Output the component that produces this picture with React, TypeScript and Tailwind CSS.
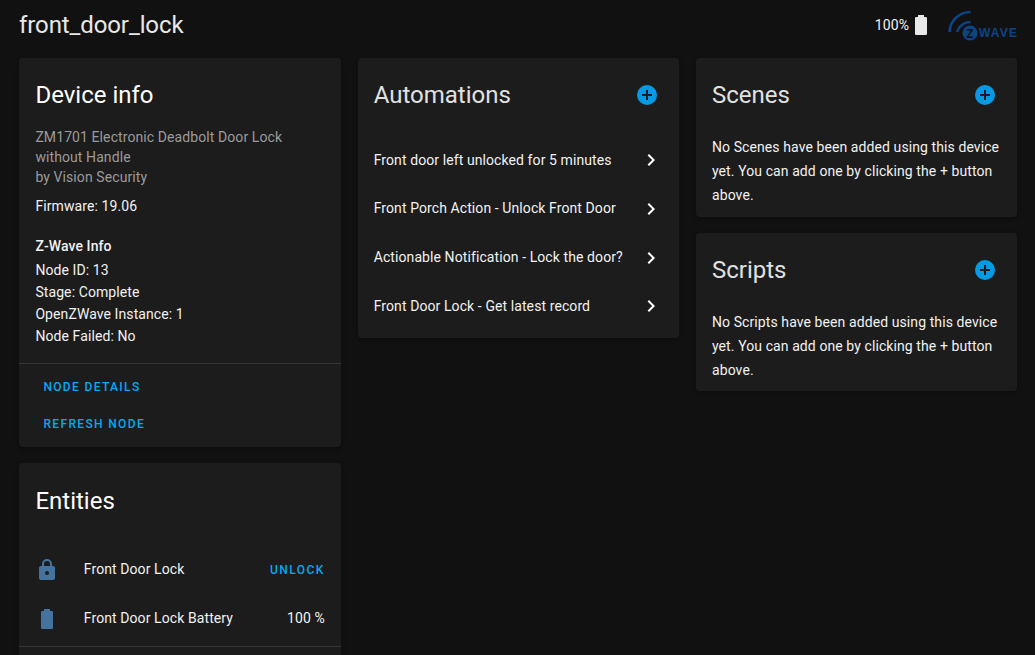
const LOCK = "M12,17A2,2 0 0,0 14,15C14,13.89 13.1,13 12,13A2,2 0 0,0 10,15A2,2 0 0,0 12,17M18,8A2,2 0 0,1 20,10V20A2,2 0 0,1 18,22H6A2,2 0 0,1 4,20V10C4,8.89 4.9,8 6,8H7V6A5,5 0 0,1 12,1A5,5 0 0,1 17,6V8H18M12,3A3,3 0 0,0 9,6V8H15V6A3,3 0 0,0 12,3Z";
const BATTERY = "M16.67,4H15V2H9V4H7.33A1.33,1.33 0 0,0 6,5.33V20.67C6,21.4 6.6,22 7.33,22H16.67A1.33,1.33 0 0,0 18,20.67V5.33C18,4.6 17.4,4 16.67,4Z";
const CHEVRON = "M8.59,16.58L13.17,12L8.59,7.41L10,6L16,12L10,18L8.59,16.58Z";
const PLUS = "M17,13H13V17H11V13H7V11H11V7H13V11H17M12,2A10,10 0 0,0 2,12A10,10 0 0,0 12,22A10,10 0 0,0 22,12A10,10 0 0,0 12,2Z";

function Icon({ d, className }: { d: string; className?: string }) {
  return (
    <svg viewBox="0 0 24 24" className={className} fill="currentColor">
      <path d={d} />
    </svg>
  );
}

function ZWave() {
  return (
    <svg viewBox="0 0 70 40" className="w-[70px] h-[40px]">
      <path d="M1.5 27 A21 21 0 0 1 22.5 7" fill="none" stroke="#0b4487" strokeWidth="2.6" />
      <path d="M9 27 A14 14 0 0 1 22.5 17" fill="none" stroke="#0b4487" strokeWidth="2.6" />
      <circle cx="22" cy="28" r="7.5" fill="#0b4487" />
      <text x="22" y="32.5" textAnchor="middle" fontSize="12" fontWeight="700" fill="#111111" fontFamily="'Liberation Sans', sans-serif">Z</text>
      <text x="31" y="32" fontSize="12" fontWeight="700" textLength={38} fill="#0b4487" fontFamily="'Liberation Sans', sans-serif">WAVE</text>
    </svg>
  );
}

function Card({ children, className = "" }: { children: React.ReactNode; className?: string }) {
  return <div className={`bg-[#1c1c1c] rounded-[4px] shadow-[0_2px_2px_rgba(0,0,0,0.14),0_1px_5px_rgba(0,0,0,0.12)] ${className}`}>{children}</div>;
}

function Title({ children, plus }: { children: React.ReactNode; plus?: boolean }) {
  return (
    <div className="flex items-center justify-between h-[74px] pl-4 pr-[20px]">
      <span className={`text-[24px] leading-[32px] tracking-normal ${plus ? "text-[#e1e1e1]" : "text-white"}`}>{children}</span>
      {plus && <Icon d={PLUS} className="w-6 h-6 text-[#039be5]" />}
    </div>
  );
}

function AutoRow({ label }: { label: string }) {
  return (
    <div className="flex items-center justify-between h-[48.67px] pl-4 pr-4">
      <span>{label}</span>
      <Icon d={CHEVRON} className="w-6 h-6 text-white" />
    </div>
  );
}

function EmptyText({ children }: { children: React.ReactNode }) {
  return <div className="px-4 pt-[3px] pb-[9.5px] leading-[24px]">{children}</div>;
}

export default function App() {
  return (
    <div
      className="h-screen w-full overflow-hidden bg-[#111111] text-[#f2f2f2] text-[14px] tracking-[0.09px]"
      style={{ fontFamily: "Roboto, sans-serif" }}
    >
      <header className="flex items-center justify-between h-[50px] pl-[19px] pr-[17px]">
        <h1 className="text-[24px] leading-[32px] font-normal tracking-[-0.1px] text-[#e8e8e8]">front_door_lock</h1>
        <div className="flex items-center">
          <span className="text-[14px]">100%</span>
          <Icon d={BATTERY} className="w-6 h-6 text-[#e8e8e8]" />
          <div className="ml-[15px]"><ZWave /></div>
        </div>
      </header>
      <main className="grid grid-cols-3 gap-x-[16.9px] items-start pl-[19.4px] pr-[17.6px] pt-[8px]">
        <div className="flex flex-col gap-4">
          <Card className="h-[389px] flex flex-col">
            <Title>Device info</Title>
            <div className="pl-4 pr-4 leading-[20px] -mt-[5px]">
              <div className="text-[#9b9b9b]">
                <div>ZM1701 Electronic Deadbolt Door Lock without Handle</div>
                <div>by Vision Security</div>
              </div>
              <div className="mt-[9px]">Firmware: 19.06</div>
              <div className="mt-[19px] font-medium leading-[22px]">Z-Wave Info</div>
              <div className="mt-[2px] leading-[22px]">
                <div>Node ID: 13</div>
                <div>Stage: Complete</div>
                <div>OpenZWave Instance: 1</div>
                <div>Node Failed: No</div>
              </div>
            </div>
            <div className="mt-[16px] border-t border-[#353535] flex flex-col items-start pl-[24px] pt-[5px] text-[#03a9f4] text-[12px] font-medium tracking-[1.35px]">
              <div className="h-[36.5px] flex items-center">NODE DETAILS</div>
              <div className="h-[36.5px] flex items-center">REFRESH NODE</div>
            </div>
          </Card>
          <Card className="h-[260px]">
            <div className="pt-[1px]"><Title>Entities</Title></div>
            <div className="pt-[7px]">
              <div className="flex items-center h-[49px] pl-4 pr-4">
                <Icon d={LOCK} className="w-6 h-6 text-[#44739e]" />
                <span className="ml-[24.4px] flex-1">Front Door Lock</span>
                <span className="text-[#03a9f4] text-[12px] font-medium tracking-[1.45px]">UNLOCK</span>
              </div>
              <div className="flex items-center h-[49px] pl-4 pr-4">
                <Icon d={BATTERY} className="w-6 h-6 text-[#44739e]" />
                <span className="ml-[24.4px] flex-1">Front Door Lock Battery</span>
                <span>100 %</span>
              </div>
            </div>
            <div className="mt-[3px] border-t border-[#353535]" />
          </Card>
        </div>
        <Card className="pt-0 pb-[7.3px]">
          <Title plus>Automations</Title>
          <div className="pt-[4px]">
            <AutoRow label="Front door left unlocked for 5 minutes" />
            <AutoRow label="Front Porch Action - Unlock Front Door" />
            <AutoRow label="Actionable Notification - Lock the door?" />
            <AutoRow label="Front Door Lock - Get latest record" />
          </div>
        </Card>
        <div className="flex flex-col gap-4">
          <Card>
            <Title plus>Scenes</Title>
            <EmptyText>No Scenes have been added using this device yet. You can add one by clicking the + button above.</EmptyText>
          </Card>
          <Card>
            <Title plus>Scripts</Title>
            <EmptyText>No Scripts have been added using this device yet. You can add one by clicking the + button above.</EmptyText>
          </Card>
        </div>
      </main>
    </div>
  );
}
